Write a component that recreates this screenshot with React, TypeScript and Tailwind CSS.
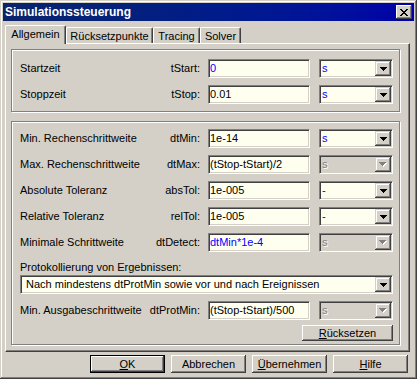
import React from "react";

function Arrow({ disabled }: { disabled?: boolean }) {
  const d = "M0 0h7v1H0zM1 1h5v1H1zM2 2h3v1H2zM3 3h1v1H3z";
  if (disabled) {
    return (
      <svg width="8" height="5" shapeRendering="crispEdges">
        <path d={d} fill="#ffffff" transform="translate(1 1)" />
        <path d={d} fill="#808080" />
      </svg>
    );
  }
  return (
    <svg width="7" height="4" shapeRendering="crispEdges">
      <path d={d} fill="#000000" />
    </svg>
  );
}

function Field({ text, blue }: { text: string; blue?: boolean }) {
  return (
    <div
      className={
        "h-[19px] w-[102px] flex items-center pl-[1px] bg-[#fffff0] border border-t-[#808080] border-l-[#808080] border-r-white border-b-white shadow-[inset_1px_1px_#404040,inset_-1px_-1px_#d4d0c8] whitespace-nowrap overflow-hidden " +
        (blue ? "text-[#0000ff]" : "text-black")
      }
    >
      {text}
    </div>
  );
}

function Combo({
  value,
  disabled,
  blue,
  wide,
}: {
  value: string;
  disabled?: boolean;
  blue?: boolean;
  wide?: boolean;
}) {
  return (
    <div
      className={
        "h-[19px] flex p-[1px] border border-t-[#808080] border-l-[#808080] border-r-white border-b-white shadow-[inset_1px_1px_#404040,inset_-1px_-1px_#d4d0c8] " +
        (wide ? "w-[373px] " : "w-[74px] ") +
        (disabled ? "bg-[#d4d0c8]" : "bg-[#fffff0]")
      }
    >
      <div
        className={
          "flex-1 flex items-center whitespace-nowrap overflow-hidden " +
          (wide ? "pl-[4px] " : "pl-[1px] ") +
          (disabled
            ? "text-[#808080] [text-shadow:1px_1px_#ffffff]"
            : blue
            ? "text-[#0000ff]"
            : "text-black")
        }
      >
        {value}
      </div>
      <div className="w-[16px] h-full bg-[#d4d0c8] shadow-[inset_-1px_-1px_#404040,inset_1px_1px_#d4d0c8,inset_-2px_-2px_#808080,inset_2px_2px_#ffffff] flex items-center justify-center">
        <Arrow disabled={disabled} />
      </div>
    </div>
  );
}

function Row({
  label,
  sym,
  value,
  blueValue,
  unit,
  unitDisabled,
  blueUnit,
}: {
  label: string;
  sym: string;
  value: string;
  blueValue?: boolean;
  unit: string;
  unitDisabled?: boolean;
  blueUnit?: boolean;
}) {
  return (
    <div className="flex items-center h-[19px]">
      <div className="w-[180px] flex whitespace-nowrap">
        <span>{label}</span>
        <span className="ml-auto">{sym}</span>
      </div>
      <div className="ml-[8px]">
        <Field text={value} blue={blueValue} />
      </div>
      <div className="ml-[9px]">
        <Combo value={unit} disabled={unitDisabled} blue={blueUnit} />
      </div>
    </div>
  );
}

function Button({
  children,
  def,
  w = "w-[75px]",
}: {
  children: React.ReactNode;
  def?: boolean;
  w?: string;
}) {
  if (def) {
    return (
      <div className={"h-[18px] " + w + " border border-black flex"}>
        <div className="flex-1 flex items-center justify-center bg-[#d4d0c8] shadow-[inset_-1px_-1px_#404040,inset_1px_1px_#ffffff,inset_-2px_-2px_#808080]">
          {children}
        </div>
      </div>
    );
  }
  return (
    <div
      className={
        "h-[18px] " +
        w +
        " flex items-center justify-center bg-[#d4d0c8] shadow-[inset_-1px_-1px_#404040,inset_1px_1px_#ffffff,inset_-2px_-2px_#808080]"
      }
    >
      {children}
    </div>
  );
}

export default function App() {
  return (
    <div className="w-[417px] h-[379px] bg-[#d4d0c8] p-[3px] flex flex-col font-['Liberation_Sans',Arial,sans-serif] text-[11px] leading-[13px] text-black shadow-[inset_-1px_-1px_#404040,inset_1px_1px_#d4d0c8,inset_-2px_-2px_#808080,inset_2px_2px_#ffffff]">
      {/* Title bar */}
      <div className="h-[18px] flex items-center bg-linear-to-r from-[#0a246a] to-[#0000a8] pl-[2px] pr-[2px]">
        <span className="text-white font-bold text-[12px] leading-[14px]">
          Simulationssteuerung
        </span>
        <div className="ml-auto w-[16px] h-[14px] bg-[#d4d0c8] shadow-[inset_-1px_-1px_#404040,inset_1px_1px_#ffffff,inset_-2px_-2px_#808080] flex items-center justify-center">
          <svg width="8" height="7" shapeRendering="crispEdges">
            <path
              d="M0 0h2v1H0zM6 0h2v1H6zM1 1h2v1H1zM5 1h2v1H5zM2 2h4v1H2zM3 3h2v1H3zM2 4h4v1H2zM1 5h2v1H1zM5 5h2v1H5zM0 6h2v1H0zM6 6h2v1H6z"
              fill="#000"
            />
          </svg>
        </div>
      </div>

      {/* Body */}
      <div className="flex flex-col pl-[2px] pt-[4px]">
        {/* Tabs */}
        <div className="h-[18px] flex items-end relative z-10">
          <div className="w-[61px] h-[19px] mb-[-1px] bg-[#d4d0c8] border-l border-t border-l-white border-t-white border-r border-r-[#404040] shadow-[inset_-1px_0_#808080] rounded-t-[2px] flex justify-center pt-[2px]">
            Allgemein
          </div>
          <div className="w-[87px] h-[16px] bg-[#d4d0c8] border-l border-t border-l-white border-t-white border-r border-r-[#404040] shadow-[inset_-1px_0_#808080] rounded-t-[2px] flex justify-center pt-[2px]">
            Rücksetzpunkte
          </div>
          <div className="w-[47px] h-[16px] bg-[#d4d0c8] border-l border-t border-l-white border-t-white border-r border-r-[#404040] shadow-[inset_-1px_0_#808080] rounded-t-[2px] flex justify-center pt-[2px]">
            Tracing
          </div>
          <div className="w-[41px] h-[16px] bg-[#d4d0c8] border-l border-t border-l-white border-t-white border-r border-r-[#404040] shadow-[inset_-1px_0_#808080] rounded-t-[2px] flex justify-center pt-[2px]">
            Solver
          </div>
        </div>

        {/* Panel */}
        <div className="w-[405px] h-[309px] border border-t-white border-l-white border-r-[#404040] border-b-[#404040] shadow-[inset_-1px_-1px_#808080] pt-[5px] pl-[5px] flex flex-col">
          {/* Group 1 */}
          <div className="w-[389px] border border-[#808080] shadow-[inset_1px_1px_#ffffff,1px_1px_#ffffff] pl-[8px] pt-[9px] pb-[7px] flex flex-col gap-[7px]">
            <Row label="Startzeit" sym="tStart:" value="0" blueValue unit="s" blueUnit />
            <Row label="Stoppzeit" sym="tStop:" value="0.01" unit="s" blueUnit />
          </div>

          {/* Group 2 */}
          <div className="mt-[9px] w-[389px] h-[224px] border border-[#808080] shadow-[inset_1px_1px_#ffffff,1px_1px_#ffffff] pl-[8px] pt-[7px] flex flex-col">
            <div className="flex flex-col gap-[7px]">
              <Row label="Min. Rechenschrittweite" sym="dtMin:" value="1e-14" unit="s" blueUnit />
              <Row label="Max. Rechenschrittweite" sym="dtMax:" value="(tStop-tStart)/2" unit="s" unitDisabled />
              <Row label="Absolute Toleranz" sym="absTol:" value="1e-005" unit="-" blueUnit />
              <Row label="Relative Toleranz" sym="relTol:" value="1e-005" unit="-" blueUnit />
              <Row label="Minimale Schrittweite" sym="dtDetect:" value="dtMin*1e-4" blueValue unit="s" unitDisabled />
            </div>
            <div className="mt-[9px] h-[13px] whitespace-nowrap">
              Protokollierung von Ergebnissen:
            </div>
            <div className="mt-[1px]">
              <Combo value="Nach mindestens dtProtMin sowie vor und nach Ereignissen" wide />
            </div>
            <div className="mt-[7px]">
              <Row label="Min. Ausgabeschrittweite" sym="dtProtMin:" value="(tStop-tStart)/500" unit="s" unitDisabled />
            </div>
            <div className="mt-[5px] w-[373px] flex justify-end">
              <div className="h-[16px] w-[91px] flex items-center justify-center bg-[#d4d0c8] shadow-[inset_-1px_-1px_#404040,inset_1px_1px_#ffffff,inset_-2px_-2px_#808080]">
                <span>
                  <span className="underline">R</span>ücksetzen
                </span>
              </div>
            </div>
          </div>
        </div>
      </div>

      {/* Buttons */}
      <div className="mt-[3px] flex justify-end gap-[6px] pr-[6px]">
        <Button def>
          <span>
            <span className="underline">O</span>K
          </span>
        </Button>
        <Button>Abbrechen</Button>
        <Button>
          <span>
            <span className="underline">Ü</span>bernehmen
          </span>
        </Button>
        <Button>
          <span>
            <span className="underline">H</span>ilfe
          </span>
        </Button>
      </div>
    </div>
  );
}
